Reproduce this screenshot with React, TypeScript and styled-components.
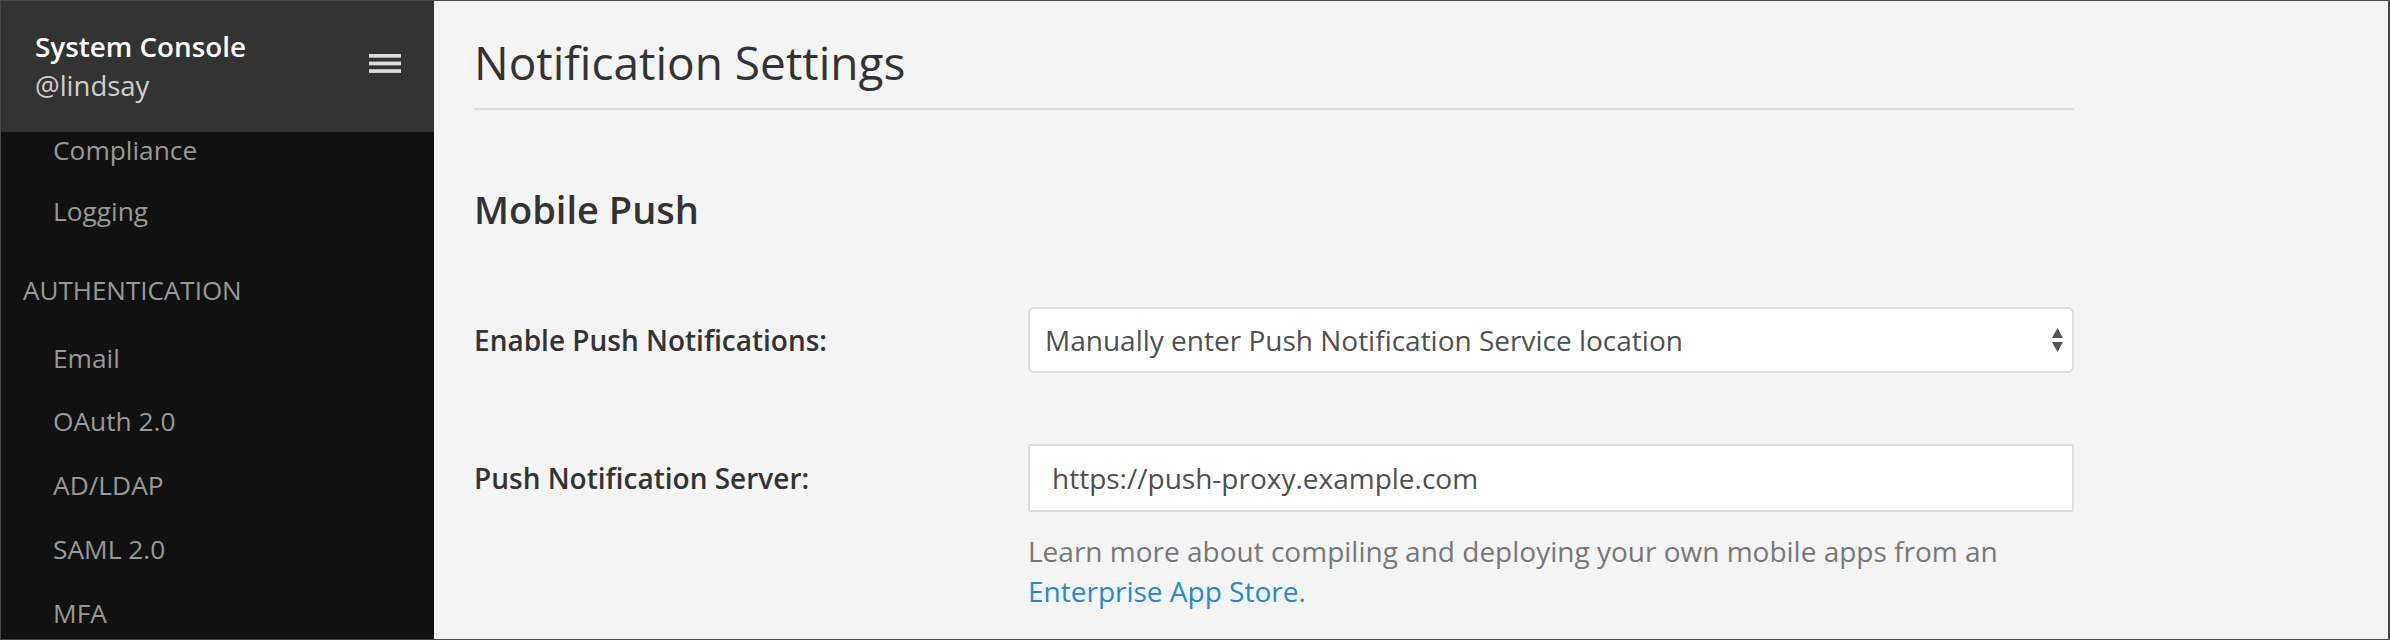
import React from "react";
import styled, { createGlobalStyle } from "styled-components";

const Global = createGlobalStyle`
  html, body { margin: 0; padding: 0; background: #fff; overflow: hidden; }
  body { font-family: "Open Sans", "Noto Sans", sans-serif; }
  *, *::before, *::after { box-sizing: border-box; }
`;

const Frame = styled.div`
  width: 2390px;
  height: 640px;
  display: flex;
  border: 1px solid #474747;
  border-right-width: 2px;
  overflow: hidden;
`;

const Sidebar = styled.aside`
  width: 433px;
  flex: none;
  background: #111111;
  display: flex;
  flex-direction: column;
  overflow: hidden;
`;

const SidebarHeader = styled.header`
  height: 131px;
  flex: none;
  background: #333333;
  display: flex;
  justify-content: space-between;
  align-items: flex-start;
  padding: 25px 33px 0 34px;
`;

const Identity = styled.div`
  display: flex;
  flex-direction: column;
`;

const ConsoleTitle = styled.div`
  font-size: 27.8px;
  font-weight: 600;
  line-height: 40px;
  color: #ffffff;
`;

const UserName = styled.div`
  font-size: 27.5px;
  line-height: 40px;
  color: #cfcfcf;
`;

const MenuButton = styled.button`
  margin-top: 28px;
  padding: 0;
  border: 0;
  background: transparent;
  width: 32px;
  height: 20px;
  display: flex;
`;

const Nav = styled.nav`
  flex: 1;
  overflow: hidden;
`;

const NavList = styled.ul`
  list-style: none;
  margin: 0;
  padding: 0;
`;

const NavItem = styled.li`
  padding: 16.875px 0 16.875px 52px;
  font-size: 26.3px;
  line-height: 30px;
  color: #999999;
  white-space: nowrap;

  &:first-child {
    padding-top: 0;
    padding-bottom: 10.875px;
    line-height: 36px;
  }
`;

const NavSection = styled.li`
  padding: 30px 0 18px 22px;
  font-size: 26px;
  line-height: 35px;
  color: #999999;
  text-transform: uppercase;
`;

const Main = styled.main`
  flex: 1;
  background: #f4f4f4;
  padding: 0 40px;
  overflow: hidden;
`;

const Content = styled.div`
  width: 1600px;
`;

const PageTitle = styled.h1`
  margin: 0;
  padding: 31px 0 16px;
  font-size: 46px;
  font-weight: 400;
  line-height: 60px;
  color: #333333;
  border-bottom: 2px solid #dddddd;
`;

const SectionTitle = styled.h2`
  margin: 75px 0 0;
  font-size: 38px;
  font-weight: 600;
  line-height: 48px;
  color: #333333;
`;

const Row = styled.div<{ $gap: number }>`
  margin-top: ${(p) => p.$gap}px;
  display: grid;
  grid-template-columns: 554px 1fr;
  align-items: center;
`;

const Label = styled.label`
  font-size: 28px;
  font-weight: 600;
  line-height: 40px;
  color: #333333;
`;

const Field = styled.div`
  display: flex;
  flex-direction: column;
`;

const SelectWrap = styled.div`
  position: relative;
`;

const Select = styled.select`
  appearance: none;
  -webkit-appearance: none;
  width: 100%;
  height: 66px;
  border: 2px solid #dddddd;
  border-radius: 6px;
  background: #ffffff;
  font-family: inherit;
  font-size: 28px;
  color: #4f4f4f;
  padding: 0 40px 0 15px;
  outline: none;
`;

const Arrows = styled.svg`
  position: absolute;
  right: 11px;
  top: 21px;
  pointer-events: none;
`;

const Input = styled.input`
  width: 100%;
  height: 68px;
  border: 2px solid #dddddd;
  border-radius: 2px;
  background: #ffffff;
  font-family: inherit;
  font-size: 28px;
  color: #4f4f4f;
  padding: 0 22px;
  outline: none;
`;

const Help = styled.p`
  margin: 19px 0 0;
  font-size: 28px;
  line-height: 40px;
  color: #777777;
`;

const Link = styled.a`
  color: #2389d7;
  text-decoration: none;
`;

const navTop = ["Compliance", "Logging"];
const navAuth = ["Email", "OAuth 2.0", "AD/LDAP", "SAML 2.0", "MFA"];

export default function App() {
  return (
    <>
      <Global />
      <Frame>
        <Sidebar>
          <SidebarHeader>
            <Identity>
              <ConsoleTitle>System Console</ConsoleTitle>
              <UserName>@lindsay</UserName>
            </Identity>
            <MenuButton aria-label="menu">
              <svg width="32" height="20" viewBox="0 0 32 20">
                <rect x="0" y="0" width="32" height="3.7" fill="#dddddd" />
                <rect x="0" y="7.6" width="32" height="3.7" fill="#dddddd" />
                <rect x="0" y="15.2" width="32" height="3.7" fill="#dddddd" />
              </svg>
            </MenuButton>
          </SidebarHeader>
          <Nav>
            <NavList>
              {navTop.map((n) => (
                <NavItem key={n}>{n}</NavItem>
              ))}
              <NavSection>Authentication</NavSection>
              {navAuth.map((n) => (
                <NavItem key={n}>{n}</NavItem>
              ))}
            </NavList>
          </Nav>
        </Sidebar>
        <Main>
          <Content>
            <PageTitle>Notification Settings</PageTitle>
            <SectionTitle>Mobile Push</SectionTitle>
            <Row $gap={74}>
              <Label>Enable Push Notifications:</Label>
              <SelectWrap>
                <Select defaultValue="manual">
                  <option value="off">Do not send push notifications</option>
                  <option value="manual">Manually enter Push Notification Service location</option>
                </Select>
                <Arrows width="11" height="24" viewBox="0 0 11 24">
                  <polygon points="0,10 5.5,0 11,10" fill="#555555" />
                  <polygon points="0,14 11,14 5.5,24" fill="#555555" />
                </Arrows>
              </SelectWrap>
            </Row>
            <Row $gap={71}>
              <Label>Push Notification Server:</Label>
              <Field>
                <Input defaultValue="https://push-proxy.example.com" />
              </Field>
            </Row>
            <Row $gap={0}>
              <span />
              <Help>
                Learn more about compiling and deploying your own mobile apps from an{" "}
                <Link href="#">Enterprise App Store</Link>.
              </Help>
            </Row>
          </Content>
        </Main>
      </Frame>
    </>
  );
}
